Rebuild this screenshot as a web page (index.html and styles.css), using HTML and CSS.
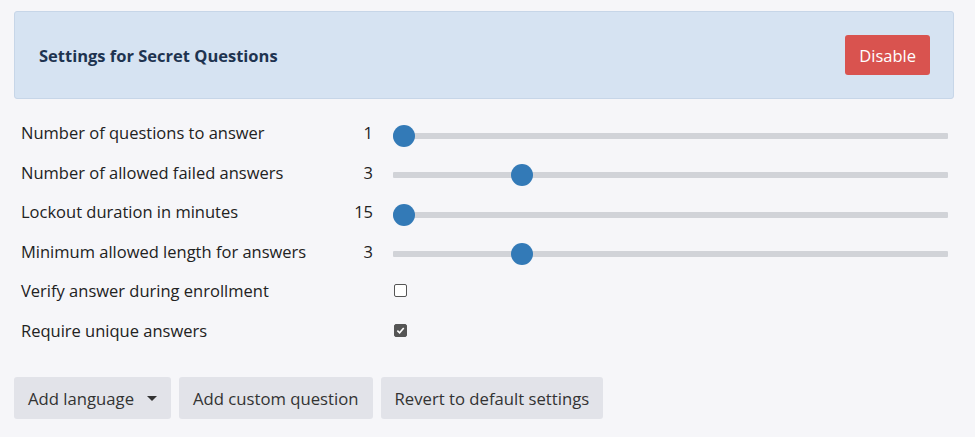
FILE: index.html
```html
<!DOCTYPE html>
<html lang="en">
<head>
  <meta charset="UTF-8" />
  <title>Secret Questions</title>
  <link rel="stylesheet" href="styles.css">
</head>
<body>
  <div class="page">
    <div class="panel-head">
      <h2>Settings for Secret Questions</h2>
      <button class="btn-danger">Disable</button>
    </div>

    <div class="settings">
      <div class="row">
        <span class="label">Number of questions to answer</span>
        <span class="value">1</span>
        <input type="range" min="1" max="10" value="1">
      </div>
      <div class="row">
        <span class="label">Number of allowed failed answers</span>
        <span class="value">3</span>
        <input type="range" min="1" max="10" value="3">
      </div>
      <div class="row">
        <span class="label">Lockout duration in minutes</span>
        <span class="value">15</span>
        <input type="range" min="15" max="120" value="15">
      </div>
      <div class="row">
        <span class="label">Minimum allowed length for answers</span>
        <span class="value">3</span>
        <input type="range" min="1" max="10" value="3">
      </div>
      <div class="row">
        <span class="label">Verify answer during enrollment</span>
        <span class="value"></span>
        <span class="check"></span>
      </div>
      <div class="row">
        <span class="label">Require unique answers</span>
        <span class="value"></span>
        <span class="check checked">
          <svg width="9" height="9" viewBox="0 0 10 10"><path d="M1.5 5.2 L4 7.6 L8.6 2.2" fill="none" stroke="#fff" stroke-width="1.8"/></svg>
        </span>
      </div>
    </div>

    <div class="actions">
      <button class="btn">Add language <span class="caret"></span></button>
      <button class="btn">Add custom question</button>
      <button class="btn">Revert to default settings</button>
    </div>
  </div>
</body>
</html>
```

FILE: styles.css
```css
body {
  margin: 0;
  background: #f6f6f9;
  font-family: "Open Sans", "Noto Sans", sans-serif;
  color: #222;
}

.page {
  padding: 11px 21px 0 14px;
}

.panel-head {
  display: flex;
  align-items: center;
  justify-content: space-between;
  height: 86px;
  padding: 0 23px 0 24px;
  background: #d6e3f2;
  border: 1px solid #c7d6e8;
  border-radius: 3px;
}

.panel-head h2 {
  margin: 0;
  font-size: 16.5px;
  font-weight: 700;
  color: #1e3350;
}

.btn-danger {
  height: 40px;
  padding: 0 14px;
  background: #d9534f;
  color: #fff;
  border: none;
  border-radius: 3px;
  font-family: inherit;
  font-size: 16.5px;
}

.settings {
  padding: 14px 6px 0 7px;
}

.row {
  display: flex;
  align-items: center;
  height: 39.5px;
}

.label {
  width: 330px;
  font-size: 16.5px;
  color: #222;
}

.value {
  width: 22px;
  text-align: right;
  font-size: 16.5px;
  margin-right: 20px;
}

.row input[type="range"] {
  -webkit-appearance: none;
  appearance: none;
  flex: 1;
  margin: 6px 0 0 0;
  height: 22px;
  background: transparent;
}

.row input[type="range"]::-webkit-slider-runnable-track {
  height: 6px;
  background: #d1d3d8;
  border-radius: 1px;
}

.row input[type="range"]::-webkit-slider-thumb {
  -webkit-appearance: none;
  width: 22px;
  height: 22px;
  margin-top: -8px;
  border-radius: 50%;
  background: #337ab7;
  border: none;
}

.check {
  display: inline-flex;
  align-items: center;
  justify-content: center;
  width: 11px;
  height: 11px;
  margin-left: 1px;
  border: 1px solid #555;
  border-radius: 2px;
  background: #fff;
}

.check.checked {
  background: #555;
}

.actions {
  display: flex;
  gap: 8px;
  margin-top: 27px;
}

.btn {
  height: 42px;
  padding: 0 14px;
  background: #e2e3e9;
  color: #333;
  border: none;
  border-radius: 3px;
  font-family: inherit;
  font-size: 16.7px;
  display: inline-flex;
  align-items: center;
}

.caret {
  display: inline-block;
  margin-left: 13px;
  border-left: 5px solid transparent;
  border-right: 5px solid transparent;
  border-top: 5px solid #333;
}
```
